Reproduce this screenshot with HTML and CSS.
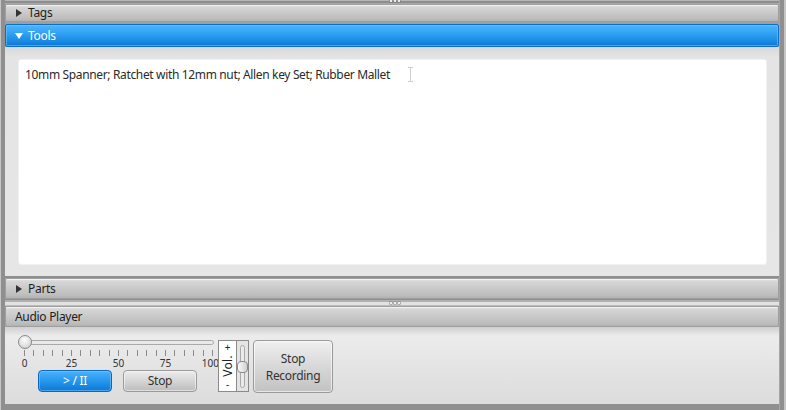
FILE: index.html
```html
<!DOCTYPE html>
<html>
<head>
<meta charset="utf-8">
<link rel="stylesheet" href="styles.css">
</head>
<body>
<div class="app">
  <div class="frame">
    <div class="grip grip-top"><span></span><span></span><span></span></div>

    <div class="hdr hdr-tags">
      <svg class="tri" width="6" height="8" viewBox="0 0 6 8"><path d="M0 0 L6 4 L0 8 Z" fill="#333"/></svg>
      <span>Tags</span>
    </div>
    <div class="gap2"></div>
    <div class="hdr hdr-tools">
      <svg class="tri" width="8" height="6" viewBox="0 0 8 6"><path d="M0 0 L8 0 L4 6 Z" fill="#fff"/></svg>
      <span>Tools</span>
    </div>

    <div class="content">
      <div class="textbox">
        <p class="tools-text">10mm Spanner; Ratchet with 12mm nut; Allen key Set; Rubber Mallet</p>
        <svg class="ibeam" width="5" height="15" viewBox="0 0 5 15"><path d="M0 0.5 H5 M2.5 0.5 V14.5 M0 14.5 H5" stroke="#d0d0d0" stroke-width="1" fill="none"/></svg>
      </div>
    </div>
    <div class="sep-dark"></div>

    <div class="hdr hdr-parts">
      <svg class="tri" width="6" height="8" viewBox="0 0 6 8"><path d="M0 0 L6 4 L0 8 Z" fill="#333"/></svg>
      <span>Parts</span>
    </div>

    <div class="splitter">
      <div class="grip"><span></span><span></span><span></span></div>
    </div>

    <div class="hdr hdr-audio">
      <span>Audio Player</span>
    </div>

    <div class="audio">
      <div class="player">
        <div class="slider">
          <div class="track"></div>
          <div class="thumb"></div>
        </div>
        <div class="ticks"></div>
        <div class="labels">
          <span>0</span><span>25</span><span>50</span><span>75</span><span class="last">100</span>
        </div>
        <div class="btns">
          <button class="btn btn-blue">&gt; / II</button>
          <button class="btn btn-gray">Stop</button>
        </div>
      </div>
      <div class="vol">
        <div class="vol-label">
          <span class="pm">+</span>
          <span class="voltext">Vol.</span>
          <span class="pm">-</span>
        </div>
        <div class="vol-slider">
          <div class="vtrack"></div>
          <div class="vthumb"></div>
        </div>
      </div>
      <button class="btn btn-rec">Stop<br>Recording</button>
    </div>
  </div>
</div>
</body>
</html>
```

FILE: styles.css
```css
html, body {
  margin: 0;
  padding: 0;
}
body {
  width: 786px;
  height: 410px;
  overflow: hidden;
  background: #a4a4a4;
  font-family: "Noto Sans", "DejaVu Sans", sans-serif;
  font-size: 12px;
  letter-spacing: -0.3px;
  color: #222;
}
.app {
  height: 410px;
  box-sizing: border-box;
  border-left: 1px solid #c6c6c6;
  border-right: 2px solid #c6c6c6;
  background: #9a9a9a;
}
.frame {
  height: 410px;
  box-sizing: border-box;
  border-left: 4px solid #8f8f8f;
  border-right: 4px solid #8f8f8f;
  padding-right: 1px;
  display: flex;
  flex-direction: column;
  background: #a6a6a6;
}

/* grips */
.grip {
  display: flex;
  justify-content: center;
  gap: 2px;
}
.grip span {
  width: 2px;
  height: 2px;
  background: #ececec;
  box-shadow: 0 0 0 0.5px #7a7a7a;
}
.grip-top {
  height: 4px;
  align-items: flex-start;
  background: linear-gradient(#b6b6b6 0 1px, #8d8d8d 1px 3px, #a9a9a9 3px);
  padding-left: 6px;
}

/* headers */
.hdr {
  box-sizing: border-box;
  display: flex;
  align-items: center;
  gap: 6px;
  padding-left: 10px;
  border: 1px solid #9f9f9f;
  border-radius: 2px;
  background: linear-gradient(#e6e6e6 0, #d6d6d6 12%, #bdbdbd 85%, #b2b2b2 100%);
  box-shadow: inset 0 1px 0 #f2f2f2;
  color: #1e1e1e;
  line-height: 14px;
}
.hdr-tags {
  height: 18px;
}
.gap2 {
  height: 2px;
  background: #9e9e9e;
}
.hdr-tools {
  height: 23px;
  padding-left: 9px;
  gap: 5px;
  border: 1px solid #0a6ccb;
  background: linear-gradient(#4cb5fd 0, #34a4f4 35%, #1b8ae4 75%, #0c79d5 100%);
  box-shadow: inset 0 0 0 1px rgba(120, 200, 255, 0.55);
  color: #fff;
}
.hdr-parts {
  height: 21px;
}
.hdr-audio {
  height: 21px;
  padding-left: 9px;
}
.tri {
  flex: none;
}

/* content */
.content {
  height: 229px;
  box-sizing: border-box;
  padding: 12px 12px 11px 13px;
  background: linear-gradient(#d9d9d9 0, #e4e4e4 10px, #e6e6e6 100%);
}
.textbox {
  position: relative;
  height: 100%;
  box-sizing: border-box;
  background: #fff;
  border: 1px solid #f1f1f1;
  border-radius: 3px;
  padding: 7px 6px;
}
.tools-text {
  margin: 0;
  font-size: 12px;
  line-height: 16px;
  letter-spacing: -0.35px;
  color: #2a2a2a;
}
.ibeam {
  position: absolute;
  left: 389px;
  top: 7px;
}
.sep-dark {
  height: 2px;
  background: #8f8f8f;
}

/* splitter */
.splitter {
  height: 7px;
  background: linear-gradient(#8e8e8e 0 1px, #b1b1b1 1px 3px, #e2e2e2 3px 6px, #bdbdbd 6px);
  display: flex;
  flex-direction: column;
}
.splitter .grip {
  margin-top: 3px;
  padding-left: 6px;
}

/* audio */
.audio {
  flex: 1;
  display: flex;
  align-items: flex-start;
  background: linear-gradient(#d0d0d0 0, #d8d8d8 3px, #ececec 9px, #e4e4e4 40px, #dcdcdc 100%);
  border-bottom: 6px solid #8f8f8f;
}
.player {
  width: 213px;
  flex: none;
  padding-top: 8px;
}
.slider {
  position: relative;
  height: 14px;
}
.track {
  position: absolute;
  left: 15px;
  top: 5px;
  width: 192px;
  height: 3px;
  border: 1px solid #a9a9a9;
  border-radius: 3px;
  background: #e9e9e9;
}
.thumb {
  position: absolute;
  left: 13px;
  top: 0;
  width: 12px;
  height: 12px;
  border: 1px solid #8a8a8a;
  border-radius: 50%;
  background: radial-gradient(circle at 45% 35%, #fdfdfd 0, #e6e6e6 45%, #c6c6c6 100%);
}
.ticks {
  margin-left: 19px;
  width: 190px;
  height: 5px;
  margin-top: 1px;
  background: repeating-linear-gradient(to right, #8a8a8a 0 1px, transparent 1px 9.4px);
  border-top: 1px solid transparent;
}
.labels {
  display: flex;
  margin-left: -4px;
  margin-top: 1px;
  height: 12px;
  font-size: 10px;
  line-height: 12px;
  letter-spacing: 0;
  color: #333;
}
.labels span {
  flex: none;
  width: 47px;
  text-align: center;
}
.labels .last {
  width: 30px;
  text-align: right;
}
.btns {
  display: flex;
  gap: 11px;
  margin-left: 33px;
  margin-top: 1px;
}

.btn {
  font-family: "Noto Sans", "DejaVu Sans", sans-serif;
  font-size: 12px;
  letter-spacing: -0.3px;
  line-height: 14px;
  padding: 0;
  margin: 0;
  border-radius: 4px;
  box-sizing: border-box;
  cursor: default;
}
.btn-blue {
  width: 74px;
  height: 22px;
  color: #fff;
  border: 1px solid #0b66bf;
  background: linear-gradient(#48b2fb 0, #2a99ee 45%, #0b79d6 100%);
  box-shadow: inset 0 0 0 1px rgba(140, 205, 255, 0.5);
}
.btn-gray {
  width: 74px;
  height: 22px;
  color: #333;
  border: 1px solid #9a9a9a;
  background: linear-gradient(#ececec 0, #d8d8d8 45%, #bcbcbc 100%);
  box-shadow: inset 0 0 0 1px rgba(255, 255, 255, 0.5);
}

.vol {
  flex: none;
  display: flex;
  margin-top: 13px;
  height: 52px;
  box-sizing: border-box;
  border: 1px solid #8a8a8a;
  background: #fff;
}
.vol-label {
  width: 18px;
  border-right: 1px solid #8a8a8a;
  display: flex;
  flex-direction: column;
  align-items: center;
  justify-content: space-between;
  padding: 1px 0 2px;
  box-sizing: border-box;
}
.pm {
  font-size: 10px;
  line-height: 10px;
  letter-spacing: 0;
  color: #222;
}
.voltext {
  writing-mode: vertical-rl;
  transform: rotate(180deg);
  font-size: 12px;
  line-height: 14px;
  letter-spacing: 0.3px;
  color: #222;
}
.vol-slider {
  width: 11px;
  position: relative;
  background: #e4e4e4;
}
.vtrack {
  position: absolute;
  left: 3px;
  top: 4px;
  width: 3px;
  height: 41px;
  border: 1px solid #a9a9a9;
  border-radius: 3px;
  background: #eaeaea;
}
.vthumb {
  position: absolute;
  left: 0;
  top: 20px;
  width: 9px;
  height: 10px;
  border: 1px solid #8a8a8a;
  border-radius: 4px;
  background: linear-gradient(to right, #fafafa, #d0d0d0);
}

.btn-rec {
  flex: none;
  margin-top: 13px;
  margin-left: 4px;
  width: 80px;
  height: 53px;
  color: #333;
  line-height: 17px;
  border: 1px solid #9a9a9a;
  background: linear-gradient(#f0f0f0 0, #dadada 45%, #c2c2c2 100%);
  box-shadow: inset 0 0 0 1px rgba(255, 255, 255, 0.6);
}
```
